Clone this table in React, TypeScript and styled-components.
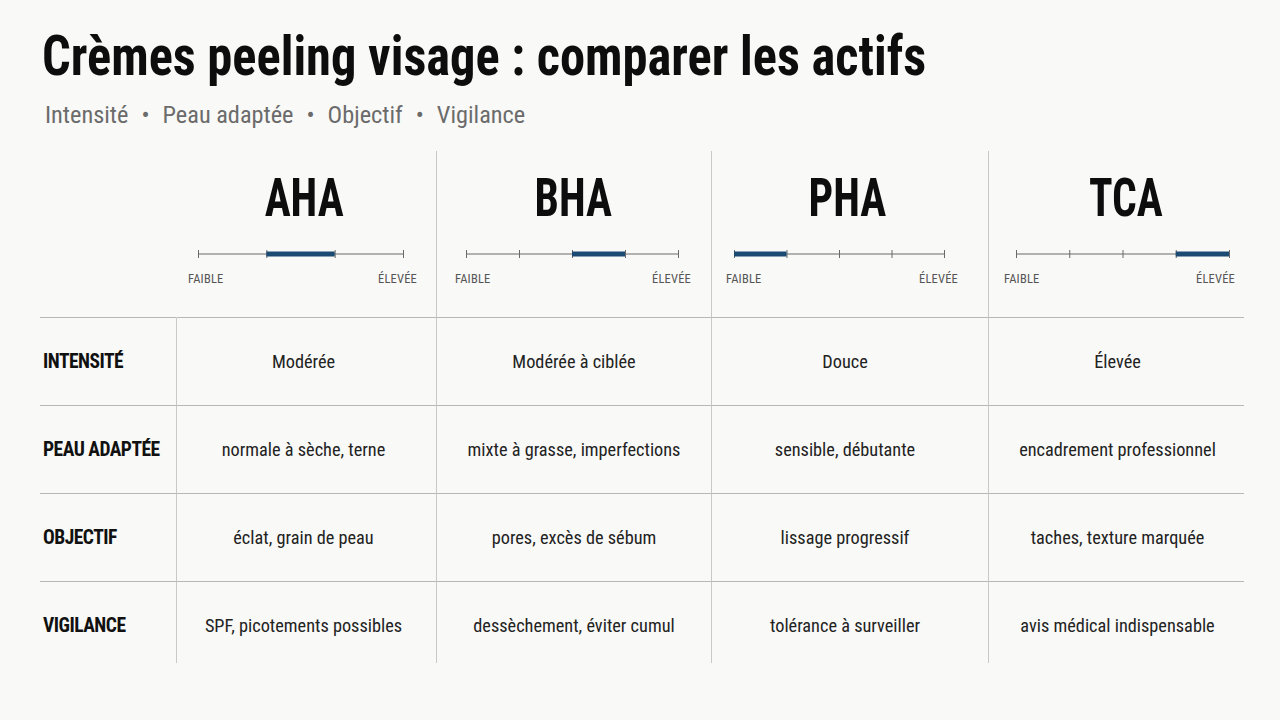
import React from "react";
import styled, { createGlobalStyle } from "styled-components";

const GlobalStyle = createGlobalStyle`
  html, body { margin: 0; padding: 0; background: #f9f9f7; }
  body {
    font-family: "Roboto Condensed", Roboto, "Liberation Sans Narrow", sans-serif;
    font-stretch: condensed;
    color: #111;
  }
`;

const Page = styled.div`
  width: 1280px;
  height: 720px;
  box-sizing: border-box;
  padding: 24px 36px 0 40px;
  overflow: hidden;
`;

const Title = styled.h1`
  margin: 0 0 0 2px;
  font-size: 55px;
  font-weight: 700;
  line-height: 64px;
  color: #0d0d0d;
  white-space: nowrap;
  transform: scaleX(0.918);
  transform-origin: left center;
`;

const Subtitle = styled.div`
  margin: 12px 0 0 5px;
  display: flex;
  align-items: center;
  gap: 13px;
  font-size: 24.3px;
  line-height: 30px;
  color: #6b6b6b;
`;

const Dot = styled.span`
  font-size: 24px;
  color: #6b6b6b;
`;

const Table = styled.div`
  margin-top: 21px;
  display: grid;
  grid-template-columns: 136px 260px 275px 277px 256px;
`;

const HeadCell = styled.div<{ $divider: boolean }>`
  height: 167px;
  box-sizing: border-box;
  border-left: ${(p) => (p.$divider ? "1px solid #c9c9c6" : "1px solid transparent")};
  border-bottom: 1px solid #b8b8b5;
  display: flex;
  flex-direction: column;
  align-items: center;
  padding-top: 19px;
`;

const Corner = styled.div`
  height: 167px;
  box-sizing: border-box;
  border-bottom: 1px solid #b8b8b5;
`;

const AcidName = styled.div<{ $shift: number }>`
  font-size: 53px;
  font-weight: 700;
  line-height: 56px;
  color: #0d0d0d;
  transform: translateX(${(p) => p.$shift}px) scaleX(0.82);
`;

const ScaleWrap = styled.div<{ $shift: number }>`
  margin-top: 22px;
  display: flex;
  flex-direction: column;
  transform: translateX(${(p) => p.$shift}px);
`;

const ScaleLabels = styled.div`
  display: flex;
  justify-content: space-between;
  margin-top: 12px;
  font-size: 12.5px;
  line-height: 14px;
  color: #555;
  letter-spacing: 0.2px;
`;

const RowLabel = styled.div<{ $h: number; $last: boolean }>`
  height: ${(p) => p.$h}px;
  box-sizing: border-box;
  padding: 32px 0 0 3px;
  border-bottom: ${(p) => (p.$last ? "none" : "1px solid #b8b8b5")};
  font-size: 19.5px;
  font-weight: 700;
  letter-spacing: -0.5px;
  line-height: 24px;
  color: #111;
  white-space: nowrap;
`;

const Cell = styled.div<{ $h: number; $last: boolean; $shift: number }>`
  height: ${(p) => p.$h}px;
  box-sizing: border-box;
  padding-top: 32px;
  border-left: 1px solid #c9c9c6;
  border-bottom: ${(p) => (p.$last ? "none" : "1px solid #b8b8b5")};
  text-align: center;
  font-size: 18.3px;
  line-height: 24px;
  color: #222;
  white-space: nowrap;
  & > span {
    display: inline-block;
    transform: translateX(${(p) => p.$shift}px);
  }
`;

type Acid = {
  name: string;
  segments: number;
  active: number;
  width: number;
  padL: number;
  padR: number;
  nameShift: number;
  scaleShift: number;
  cellShift: number;
};

const acids: Acid[] = [
  { name: "AHA", segments: 3, active: 1, width: 205, padL: 10, padR: 14, nameShift: -2, scaleShift: -4, cellShift: -3 },
  { name: "BHA", segments: 4, active: 2, width: 212, padL: 11, padR: 13, nameShift: -1, scaleShift: -1, cellShift: 0 },
  { name: "PHA", segments: 4, active: 0, width: 210, padL: 8, padR: 14, nameShift: -3, scaleShift: -8, cellShift: -5 },
  { name: "TCA", segments: 4, active: 3, width: 213, padL: 12, padR: 6, nameShift: 9, scaleShift: 3, cellShift: 1 },
];

const Scale: React.FC<{ a: Acid }> = ({ a }) => {
  const w = a.width;
  const total = w + a.padL + a.padR;
  const seg = w / a.segments;
  const ticks = Array.from({ length: a.segments + 1 }, (_, i) => a.padL + i * seg);
  const x1 = a.padL + a.active * seg;
  const x2 = x1 + seg;
  return (
    <ScaleWrap $shift={a.scaleShift} style={{ width: total }}>
      <svg width={total} height={12} viewBox={`0 0 ${total} 12`}>
        <line x1={a.padL} y1={6} x2={a.padL + w} y2={6} stroke="#6a6a6a" strokeWidth={1} />
        {ticks.map((t, i) => (
          <line key={i} x1={t + 0.5} y1={2} x2={t + 0.5} y2={10} stroke="#6a6a6a" strokeWidth={1} />
        ))}
        <line x1={x1} y1={6} x2={x2} y2={6} stroke="#1b4a73" strokeWidth={5} />
      </svg>
      <ScaleLabels>
        <span>FAIBLE</span>
        <span>ÉLEVÉE</span>
      </ScaleLabels>
    </ScaleWrap>
  );
};

const rows: { label: string; values: string[] }[] = [
  { label: "INTENSITÉ", values: ["Modérée", "Modérée à ciblée", "Douce", "Élevée"] },
  {
    label: "PEAU ADAPTÉE",
    values: ["normale à sèche, terne", "mixte à grasse, imperfections", "sensible, débutante", "encadrement professionnel"],
  },
  {
    label: "OBJECTIF",
    values: ["éclat, grain de peau", "pores, excès de sébum", "lissage progressif", "taches, texture marquée"],
  },
  {
    label: "VIGILANCE",
    values: ["SPF, picotements possibles", "dessèchement, éviter cumul", "tolérance à surveiller", "avis médical indispensable"],
  },
];

const subtitleParts = ["Intensité", "Peau adaptée", "Objectif", "Vigilance"];

export default function App() {
  return (
    <>
      <GlobalStyle />
      <Page>
        <Title>Crèmes peeling visage : comparer les actifs</Title>
        <Subtitle>
          {subtitleParts.map((p, i) => (
            <React.Fragment key={p}>
              {i > 0 && <Dot>•</Dot>}
              <span>{p}</span>
            </React.Fragment>
          ))}
        </Subtitle>
        <Table>
          <Corner />
          {acids.map((a, i) => (
            <HeadCell key={a.name} $divider={i > 0}>
              <AcidName $shift={a.nameShift}>{a.name}</AcidName>
              <Scale a={a} />
            </HeadCell>
          ))}
          {rows.map((r, ri) => {
            const last = ri === rows.length - 1;
            const h = last ? 81 : 88;
            return (
              <React.Fragment key={r.label}>
                <RowLabel $h={h} $last={last}>{r.label}</RowLabel>
                {r.values.map((v, ci) => (
                  <Cell key={v} $h={h} $last={last} $shift={acids[ci].cellShift}>
                    <span>{v}</span>
                  </Cell>
                ))}
              </React.Fragment>
            );
          })}
        </Table>
      </Page>
    </>
  );
}
